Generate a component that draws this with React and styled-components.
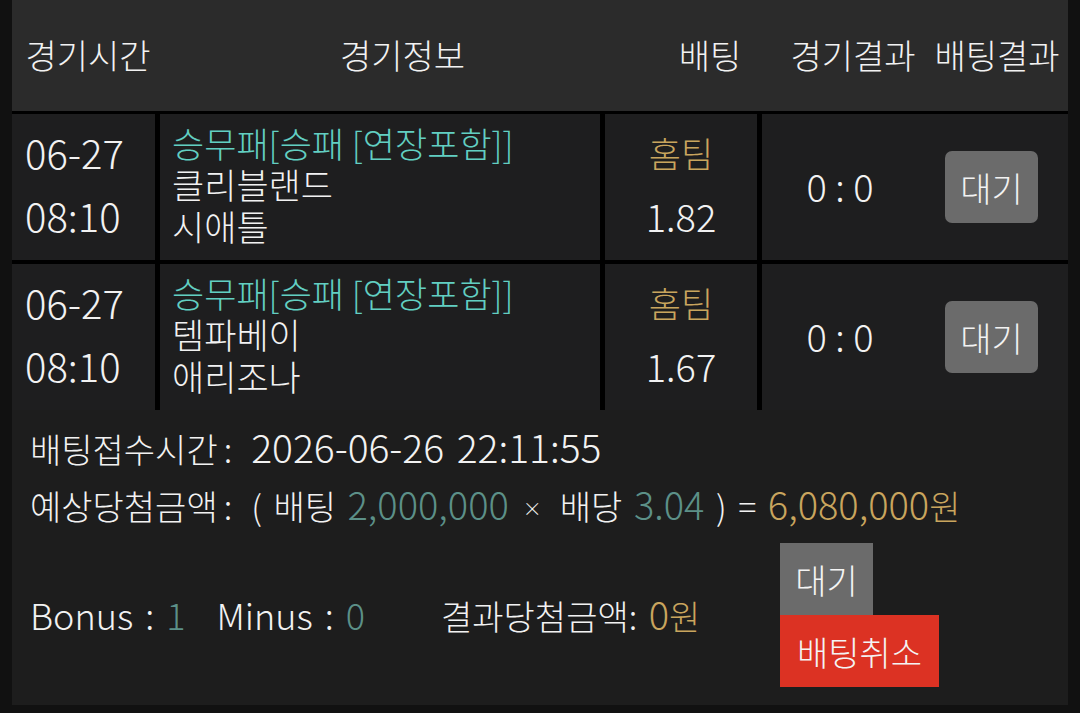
import React from "react";
import styled, { createGlobalStyle } from "styled-components";

const GlobalStyle = createGlobalStyle`
  html, body {
    margin: 0;
    padding: 0;
    background: #111111;
  }
  body {
    font-family: "Noto Sans CJK KR", "Noto Sans", sans-serif;
    font-weight: 300;
    color: #f2f2f2;
  }
`;

const colors = {
  white: "#f2f2f2",
  teal: "#5c9088",
  aqua: "#62cfc2",
  gold: "#c9a55e",
};

const Page = styled.div`
  width: 1080px;
  height: 713px;
  padding-left: 12px;
  box-sizing: border-box;
  background: #111111;
  overflow: hidden;
`;

const Panel = styled.div`
  width: 1056px;
  background: #000;
`;

const Header = styled.div`
  display: grid;
  grid-template-columns: 152px 477px 138px 148px 140px;
  align-items: center;
  height: 111px;
  padding-bottom: 3px;
  box-sizing: border-box;
  background: #2b2b2b;
  font-size: 34px;
`;

const HeadCell = styled.div`
  text-align: center;
  white-space: nowrap;
`;

const Board = styled.div`
  display: grid;
  grid-template-columns: 143px 440px 152px 306px;
  grid-auto-rows: 146px;
  gap: 4px 5px;
  padding-top: 3px;
  background: #000;
`;

const Cell = styled.div`
  display: flex;
  flex-direction: column;
  justify-content: center;
  align-items: ${(p) => (p.$center ? "center" : "flex-start")};
  padding-left: ${(p) => p.$pad || 0}px;
  padding-bottom: 6px;
  box-sizing: border-box;
  background: #1e1e1f;
  font-size: 35px;
  line-height: ${(p) => p.$lh || 63}px;
  white-space: nowrap;
`;

const Num = styled.span`
  font-size: ${(p) => p.$size || 38}px;
  color: ${(p) => colors[p.$c] || "inherit"};
`;

const Tint = styled.span`
  color: ${(p) => colors[p.$c]};
`;

const Colon = styled.span`
  margin: 0 19px 0 6px;
`;

const Times = styled.span`
  display: inline-block;
  margin: 0 18px 0 14px;
  font-size: 19px;
  vertical-align: 4px;
`;

const ResultCell = styled(Cell)`
  flex-direction: row;
  align-items: center;
  justify-content: flex-start;
  padding-bottom: 0;
`;

const Score = styled.div`
  width: 156px;
  padding-bottom: 3px;
  text-align: center;
`;

const WaitBadge = styled.div`
  margin-left: 27px;
  width: 93px;
  height: 72px;
  border-radius: 7px;
  background: #6b6b6b;
  display: flex;
  align-items: center;
  justify-content: center;
  font-size: 34px;
`;

const Summary = styled.div`
  height: 295px;
  box-sizing: border-box;
  padding: 7px 0 0 18px;
  background: #1d1d1d;
  font-size: 34px;
  word-spacing: 4px;
`;

const Line = styled.div`
  height: 58px;
  line-height: 58px;
  white-space: nowrap;
`;

const Footer = styled.div`
  display: flex;
  align-items: center;
  margin-top: 10px;
`;

const Stats = styled.div`
  width: 750px;
  white-space: nowrap;
  line-height: 58px;
`;

const Gap = styled.span`
  display: inline-block;
  width: ${(p) => p.$w}px;
`;

const Actions = styled.div`
  display: flex;
  flex-direction: column;
  align-items: flex-start;
`;

const ActionBtn = styled.button`
  height: 72px;
  width: ${(p) => p.$w}px;
  border: 0;
  padding: 0;
  margin: 0;
  background: ${(p) => (p.$danger ? "#dc3223" : "#6b6b6b")};
  color: #f4f4f4;
  font-family: inherit;
  font-weight: 300;
  font-size: 34px;
  cursor: pointer;
`;

const games = [
  { date: "06-27", time: "08:10", type: "승무패[승패 [연장포함]]", home: "클리블랜드", away: "시애틀", pick: "홈팀", odds: "1.82", score: "0 : 0" },
  { date: "06-27", time: "08:10", type: "승무패[승패 [연장포함]]", home: "템파베이", away: "애리조나", pick: "홈팀", odds: "1.67", score: "0 : 0" },
];

export default function App() {
  return (
    <Page>
      <GlobalStyle />
      <Panel>
        <Header>
          <HeadCell>경기시간</HeadCell>
          <HeadCell>경기정보</HeadCell>
          <HeadCell>배팅</HeadCell>
          <HeadCell>경기결과</HeadCell>
          <HeadCell>배팅결과</HeadCell>
        </Header>

        <Board>
          {games.map((g, i) => (
            <React.Fragment key={i}>
              <Cell $pad={13}>
                <Num $size={40}>{g.date}</Num>
                <Num $size={40}>{g.time}</Num>
              </Cell>
              <Cell $pad={12} $lh={41.5}>
                <Tint $c="aqua">{g.type}</Tint>
                <span>{g.home}</span>
                <span>{g.away}</span>
              </Cell>
              <Cell $center>
                <Tint $c="gold">{g.pick}</Tint>
                <Num>{g.odds}</Num>
              </Cell>
              <ResultCell>
                <Score>
                  <Num>{g.score}</Num>
                </Score>
                <WaitBadge>대기</WaitBadge>
              </ResultCell>
            </React.Fragment>
          ))}
        </Board>

        <Summary>
          <Line>
            배팅접수시간<Colon>:</Colon>
            <Num $size={39}>2026-06-26 22:11:55</Num>
          </Line>
          <Line>
            예상당첨금액<Colon>:</Colon>( 배팅 <Num $c="teal">2,000,000</Num>
            <Times>×</Times>
            배당 <Num $c="teal">3.04</Num> ) = <Num $c="gold">6,080,000</Num>
            <Tint $c="gold">원</Tint>
          </Line>
          <Footer>
            <Stats>
              <Num $size={36}>Bonus : </Num>
              <Num $size={36} $c="teal">1</Num>
              <Gap $w={31} />
              <Num $size={36}>Minus : </Num>
              <Num $size={36} $c="teal">0</Num>
              <Gap $w={76} />
              결과당첨금액: <Num $c="gold">0</Num>
              <Tint $c="gold">원</Tint>
            </Stats>
            <Actions>
              <ActionBtn $w={93}>대기</ActionBtn>
              <ActionBtn $w={159} $danger>
                배팅취소
              </ActionBtn>
            </Actions>
          </Footer>
        </Summary>
      </Panel>
    </Page>
  );
}
